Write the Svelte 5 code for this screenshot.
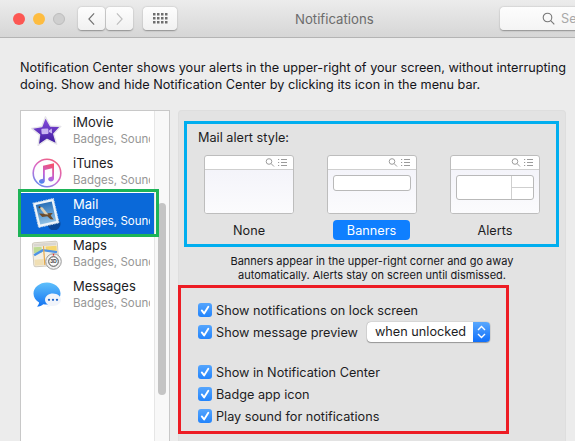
<script lang="ts">
  const apps = [
    { name: 'iMovie', icon: 'imovie' },
    { name: 'iTunes', icon: 'itunes' },
    { name: 'Mail', icon: 'mail', selected: true },
    { name: 'Maps', icon: 'maps' },
    { name: 'Messages', icon: 'messages' }
  ]

  const styles = [
    { label: 'None', kind: 'none' },
    { label: 'Banners', kind: 'banner', active: true },
    { label: 'Alerts', kind: 'alert' }
  ]

  const firstChecks = ['Show notifications on lock screen', 'Show message preview']
  const secondChecks = ['Show in Notification Center', 'Badge app icon', 'Play sound for notifications']
</script>

{#snippet check(label: string)}
  <span class="check-box">
    <svg viewBox="0 0 14 14" width="14" height="14" fill="none" stroke="#fff" stroke-width="1.9" stroke-linecap="round" stroke-linejoin="round">
      <path d="M3.8 7.4l2.3 3 4.2-6.6" />
    </svg>
  </span>
  <span class="check-label">{label}</span>
{/snippet}

{#snippet appIcon(kind: string)}
  <svg class="app-icon" viewBox="0 0 32 32" width="32" height="32">
    {#if kind === 'imovie'}
      <defs>
        <linearGradient id="star" x1="0" y1="0" x2="0" y2="1">
          <stop offset="0" stop-color="#8a4fe0" />
          <stop offset="1" stop-color="#3c1a9c" />
        </linearGradient>
      </defs>
      <g transform="rotate(-4 15 16)">
        <polygon points="15.5,0.8 19.8,10.3 30.2,11.4 22.6,18.4 24.8,28.8 15.5,23.4 6.2,28.8 8.4,18.4 0.8,11.4 11.2,10.3" fill="url(#star)" stroke="#e6e4ea" stroke-width="1.4" stroke-linejoin="round" />
        <rect x="10.5" y="12.5" width="7" height="5.5" rx="1" fill="#c9b4f2" />
        <path d="M18 14.8l3-1.8v5l-3-1.8z" fill="#c9b4f2" />
      </g>
    {:else if kind === 'itunes'}
      <defs>
        <linearGradient id="ring" x1="0.8" y1="0" x2="0.2" y2="1">
          <stop offset="0" stop-color="#f2607c" />
          <stop offset="0.55" stop-color="#d56ad0" />
          <stop offset="1" stop-color="#5f8cf0" />
        </linearGradient>
        <linearGradient id="note" x1="0.7" y1="0" x2="0.3" y2="1">
          <stop offset="0" stop-color="#f4506e" />
          <stop offset="0.55" stop-color="#c35fd6" />
          <stop offset="1" stop-color="#4d84ef" />
        </linearGradient>
      </defs>
      <circle cx="16" cy="16" r="13.8" fill="#fdfdfe" stroke="url(#ring)" stroke-width="1.6" />
      <path d="M12 8.800l11-2.500v15.400c0 1.600-1.500 2.800-3.100 2.800s-2.700-1-2.700-2.200c0-1.500 1.400-2.400 3-2.600l1-.2V11.200l-7.400 1.700v11c0 1.600-1.500 2.800-3.100 2.800s-2.700-1-2.700-2.200c0-1.500 1.400-2.400 3-2.600l1-.2z" fill="url(#note)" />
    {:else if kind === 'mail'}
      <defs>
        <linearGradient id="sky" x1="0" y1="0" x2="0" y2="1">
          <stop offset="0" stop-color="#2a70b8" />
          <stop offset="1" stop-color="#8fc0e4" />
        </linearGradient>
      </defs>
      <circle cx="23" cy="26" r="6.500" fill="#0a3f86" opacity="0.8" />
      <g transform="rotate(-13 15 15)">
        <rect x="4.500" y="2.500" width="21" height="25" fill="#eef4fa" stroke="#c4d6e6" stroke-width="1" stroke-dasharray="1.600 1" />
        <rect x="6.800" y="5" width="16.400" height="20" fill="url(#sky)" />
        <path d="M13.500 15.500l-5.500-1.500 2.500 4 5 .5 2.500 3.500 3 1-2-4.500 2.500-2-5-1z" fill="#6b4a2a" />
        <path d="M10 7.500l3 1.500 2.500 5 1.500 3-3.500-1-2.500-5z" fill="#dccfb2" />
        <circle cx="10" cy="8" r="1" fill="#4a3520" />
      </g>
    {:else if kind === 'maps'}
      <g transform="rotate(-4 14 14)">
        <rect x="2" y="3" width="25" height="24" rx="2" fill="#f4efe3" stroke="#cfcabe" />
        <rect x="3" y="4" width="23" height="3" fill="#d9d6d0" />
        <path d="M3 7.500h8v6H3z" fill="#bedb94" />
        <path d="M15 7.500h11v5H15z" fill="#f5d66e" />
        <path d="M3 20h9v6H3z" fill="#f0dfb4" />
        <path d="M3 15.500l9-4.500 14 3" fill="none" stroke="#4e93e6" stroke-width="2.400" />
        <path d="M13 7v19" stroke="#e8a94a" stroke-width="1.200" />
      </g>
      <circle cx="22.500" cy="22.500" r="7.800" fill="#f0f0f0" stroke="#9a9a9a" stroke-width="1" />
      <circle cx="22.500" cy="22.500" r="4.800" fill="#fafafa" stroke="#4c4c4c" stroke-width="1" />
      <path d="M22.500 14.800v1.800" stroke="#e0332e" stroke-width="1.400" />
      <text x="22.500" y="24.400" text-anchor="middle" font-size="5.200" font-weight="700" font-family="Liberation Sans, sans-serif" fill="#444">3D</text>
    {:else}
      <defs>
        <linearGradient id="bubble" x1="0" y1="0" x2="0" y2="1">
          <stop offset="0" stop-color="#5fc0fb" />
          <stop offset="1" stop-color="#1474f2" />
        </linearGradient>
      </defs>
      <path d="M16 2.5C8.5 2.5 2.5 7.4 2.5 13.6c0 3.8 2.2 7 5.6 9-.2 1.6-1 3-2.2 4 2.6 0 4.8-.8 6.4-2.4 1.2.3 2.5.4 3.700.4 7.500 0 13.500-5 13.500-11S23.500 2.500 16 2.500z" fill="url(#bubble)" />
      <path d="M22 13.500c-4.400 0-8 2.700-8 6.200 0 2 1.200 3.800 3 4.900-.2 1-.7 1.800-1.400 2.500 1.700 0 3-.5 4.100-1.400.7.200 1.500.200 2.300.200 4.400 0 8-2.800 8-6.200s-3.600-6.200-8-6.200z" fill="#f1f4fa" />
      <circle cx="18" cy="19.800" r="1.150" fill="#1e63c8" />
      <circle cx="22" cy="19.800" r="1.150" fill="#1e63c8" />
      <circle cx="26" cy="19.800" r="1.150" fill="#1e63c8" />
    {/if}
  </svg>
{/snippet}

<div class="window">
  <header class="titlebar">
    <div class="lights">
      <span class="light red"></span>
      <span class="light yellow"></span>
      <span class="light off"></span>
    </div>
    <div class="nav">
      <button class="tb-btn nav-btn" aria-label="Back">
        <svg viewBox="0 0 10 16" width="9" height="14" fill="none" stroke="#707070" stroke-width="1.300"><path d="M8 1.500L2 8l6 6.500" /></svg>
      </button>
      <button class="tb-btn nav-btn" aria-label="Forward">
        <svg viewBox="0 0 10 16" width="9" height="14" fill="none" stroke="#bdbdbd" stroke-width="1.300"><path d="M2 1.500L8 8l-6 6.500" /></svg>
      </button>
    </div>
    <button class="tb-btn grid-btn" aria-label="Show all">
      <svg viewBox="0 0 15 11" width="15" height="11" fill="#6e6e6e">
        {#each [0, 1, 2] as r}
          {#each [0, 1, 2, 3] as c}
            <rect x={c * 4} y={r * 4} width="2.500" height="2.500" />
          {/each}
        {/each}
      </svg>
    </button>
    <span class="title">Notifications</span>
    <div class="search">
      <svg viewBox="0 0 13 13" width="13" height="13" fill="none" stroke="#777" stroke-width="1.100"><circle cx="5.500" cy="5.500" r="4.300" /><path d="M8.700 8.700L12.300 12.300" /></svg>
      <span>Se</span>
    </div>
  </header>

  <p class="intro">Notification Center shows your alerts in the upper-right of your screen, without interrupting<br />doing. Show and hide Notification Center by clicking its icon in the menu bar.</p>

  <div class="columns">
    <aside class="sidebar">
      <ul class="app-list">
        {#each apps as app}
          <li class="app-row" class:selected={app.selected}>
            {@render appIcon(app.icon)}
            <div class="app-text">
              <span class="app-name">{app.name}</span>
              <span class="app-sub">Badges, Sounds</span>
            </div>
          </li>
        {/each}
      </ul>
      <div class="track"><div class="thumb"></div></div>
    </aside>

    <section class="panel">
      <div class="style-title">Mail alert style:</div>
      <div class="styles">
        {#each styles as s}
          <div class="style-col">
            <div class="card">
              <div class="card-head">
                <svg viewBox="0 0 24 9" width="24" height="9" fill="none" stroke="#9b9b9b" stroke-width="1">
                  <circle cx="6" cy="3.500" r="2.800" /><path d="M8 5.500L11 8.500M15 1.500h1.200M18 1.500h6M15 4.500h1.200M18 4.500h6M15 7.500h1.200M18 7.500h6" />
                </svg>
              </div>
              <div class="card-body">
                {#if s.kind === 'banner'}
                  <div class="banner-box"></div>
                {:else if s.kind === 'alert'}
                  <div class="alert-box">
                    <div class="alert-main"></div>
                    <div class="alert-side"><div></div><div></div></div>
                  </div>
                {/if}
              </div>
            </div>
            <div class="style-label" class:active={s.active}>{s.label}</div>
          </div>
        {/each}
      </div>
      <p class="caption">Banners appear in the upper-right corner and go away<br />automatically. Alerts stay on screen until dismissed.</p>

      <div class="checks">
        {#each firstChecks as label, i}
          <div class="check-row">
            {@render check(label)}
            {#if i === 1}
              <div class="select">
                <span class="select-value">when unlocked</span>
                <span class="stepper">
                  <svg viewBox="0 0 9 14" width="9" height="14" fill="none" stroke="#fff" stroke-width="1.400"><path d="M1 5l3.500-3.500L8 5M1 9l3.500 3.500L8 9" /></svg>
                </span>
              </div>
            {/if}
          </div>
        {/each}
        <div class="check-gap"></div>
        {#each secondChecks as label}
          <div class="check-row">{@render check(label)}</div>
        {/each}
      </div>
    </section>
  </div>

  <!-- annotation frames drawn on top of the screenshot -->
  <div class="mark mark-green"></div>
  <div class="mark mark-blue"></div>
  <div class="mark mark-red"></div>
</div>

<style>
  :global(body) {
    margin: 0;
    background: #ececec;
  }

  .window {
    position: relative;
    width: 575px;
    height: 441px;
    overflow: hidden;
    background: #ececec;
    font-family: Inter, "Liberation Sans", sans-serif;
    font-size: 12.700px;
    color: #1d1d1f;
  }

  .titlebar {
    display: flex;
    align-items: center;
    height: 38px;
    padding: 0 0 0 13px;
    background: linear-gradient(#ececec, #d6d6d6);
    border-bottom: 1px solid #b4b4b4;
    box-sizing: border-box;
  }

  .titlebar > * { flex-shrink: 0; }

  .lights { display: flex; gap: 8px; }
  .light { width: 12px; height: 12px; border-radius: 50%; box-sizing: border-box; }
  .red { background: #fc5753; }
  .yellow { background: #fdbc40; }
  .off { background: #cfcfcf; border: 1px solid #bdbdbd; }

  .tb-btn {
    display: flex;
    align-items: center;
    justify-content: center;
    height: 23px;
    padding: 0;
    border: none;
    border-radius: 4px;
    background: linear-gradient(#fdfdfd, #f1f1f1);
    box-shadow: 0 0.500px 1.500px rgba(0, 0, 0, 0.35);
  }

  .nav { display: flex; gap: 1px; margin-left: 13px; }
  .nav-btn { width: 27px; }
  .grid-btn { width: 34px; margin-left: 10px; }

  .title {
    margin-left: 118px;
    font-size: 13.200px;
    color: #6c6c6c;
  }

  .search {
    display: flex;
    align-items: center;
    gap: 6px;
    width: 100px;
    height: 23px;
    margin-left: auto;
    margin-right: -25px;
    padding-left: 42px;
    box-sizing: border-box;
    color: #a8a8a8;
    background: linear-gradient(#fdfdfd, #f4f4f4);
    border-radius: 4px;
    box-shadow: 0 0.500px 1.500px rgba(0, 0, 0, 0.35);
  }

  .intro {
    margin: 21px 0 0 20px;
    line-height: 17px;
    white-space: nowrap;
    color: #15151a;
  }

  .columns {
    display: flex;
    gap: 8px;
    margin: 17px 0 0 20px;
    height: 340px;
  }

  .sidebar {
    display: flex;
    width: 150px;
    box-sizing: border-box;
    background: #fff;
    border: 1px solid #c8c8c8;
    border-bottom: none;
  }

  .app-list {
    flex: 1;
    margin: 0;
    padding: 0;
    list-style: none;
    min-width: 0;
  }

  .app-row {
    display: flex;
    align-items: center;
    gap: 10px;
    height: 41px;
    padding-left: 10px;
    overflow: hidden;
  }

  .app-row.selected {
    background: #0a69d9;
    color: #fff;
  }

  .app-icon { flex-shrink: 0; }

  .app-text {
    display: flex;
    flex-direction: column;
    gap: 2px;
    width: 77px;
    overflow: hidden;
    white-space: nowrap;
    margin-top: -3px;
  }

  .app-name { font-size: 13px; line-height: 15px; }
  .app-sub { font-size: 11.500px; line-height: 14px; color: #969696; }
  .selected .app-sub { color: #fff; }

  .track {
    width: 15px;
    flex-shrink: 0;
    background: #f8f8f8;
    border-left: 1px solid #e6e6e6;
    box-sizing: border-box;
  }

  .thumb {
    width: 8px;
    height: 192px;
    margin: 92px 0 0 3px;
    border-radius: 4px;
    background: #c4c4c4;
  }

  .panel {
    width: 388px;
    box-sizing: border-box;
    padding: 19px 25px 0;
    background: #e3e3e3;
    border-radius: 4px 4px 0 0;
    border: 1px solid #dedede;
    border-bottom: none;
  }

  .style-title { line-height: 16px; margin-left: -6px; }

  .styles {
    display: flex;
    gap: 33px;
    margin-top: 9px;
  }

  .style-col {
    display: flex;
    flex-direction: column;
    align-items: center;
    width: 90px;
  }

  .card {
    width: 90px;
    height: 59px;
    box-sizing: border-box;
    display: flex;
    flex-direction: column;
    border: 1px solid #bdbdbd;
    border-radius: 3px;
    background: #fff;
    overflow: hidden;
  }

  .card-head {
    display: flex;
    justify-content: flex-end;
    align-items: center;
    height: 13px;
    padding-right: 6px;
    flex-shrink: 0;
    border-bottom: 1px solid #cfcfcf;
  }

  .card-body {
    flex: 1;
    padding: 5px 5px 0;
    background: linear-gradient(#f4f4fa, #fbfbfd);
  }

  .banner-box {
    height: 16px;
    box-sizing: border-box;
    background: #fff;
    border: 1px solid #b9b9b9;
    border-radius: 3px;
  }

  .alert-box {
    display: flex;
    height: 25px;
    box-sizing: border-box;
    background: #fff;
    border: 1px solid #b9b9b9;
    border-radius: 3px;
  }

  .alert-main { flex: 1; border-right: 1px solid #cfcfcf; }
  .alert-side { display: flex; flex-direction: column; width: 21px; }
  .alert-side div { flex: 1; }
  .alert-side div + div { border-top: 1px solid #cfcfcf; }

  .style-label {
    display: flex;
    align-items: center;
    justify-content: center;
    width: 77px;
    height: 20px;
    margin-top: 6px;
    border-radius: 4px;
  }

  .style-label.active {
    background: #0f7fff;
    color: #fff;
    margin-right: 1px;
  }

  .caption {
    margin: 14px 0 0 -25px;
    width: 386px;
    text-align: center;
    font-size: 11px;
    line-height: 14px;
    color: #15151a;
  }

  .checks { margin: 17px 0 0 -6px; }

  .check-row {
    display: flex;
    align-items: center;
    height: 22px;
  }

  .check-gap { height: 18px; }

  .check-box {
    display: flex;
    width: 14px;
    height: 14px;
    flex-shrink: 0;
    border-radius: 3px;
    background: linear-gradient(#55a5fd, #2284fc);
  }

  .check-label { margin-left: 4px; }

  .select {
    display: flex;
    align-items: stretch;
    width: 123px;
    height: 20px;
    margin-left: 9px;
    box-sizing: border-box;
    background: #fff;
    border-radius: 4px;
    box-shadow: 0 0 1px rgba(0, 0, 0, 0.5), 0 1px 1px rgba(0, 0, 0, 0.3);
    overflow: hidden;
  }

  .select-value {
    flex: 1;
    padding-left: 8px;
    line-height: 20px;
  }

  .stepper {
    display: flex;
    align-items: center;
    justify-content: center;
    width: 17px;
    background: linear-gradient(#5aa8fd, #0f6ffb);
  }

  .mark {
    position: absolute;
    box-sizing: border-box;
    border-style: solid;
    border-width: 3px;
    pointer-events: none;
  }

  .mark-green { left: 18px; top: 189px; width: 141px; height: 48px; border-color: #1db457; }
  .mark-blue { left: 184px; top: 121px; width: 375px; height: 126px; border-color: #00aeef; }
  .mark-red { left: 178px; top: 285px; width: 331px; height: 149px; border-color: #ed1c24; }
</style>
